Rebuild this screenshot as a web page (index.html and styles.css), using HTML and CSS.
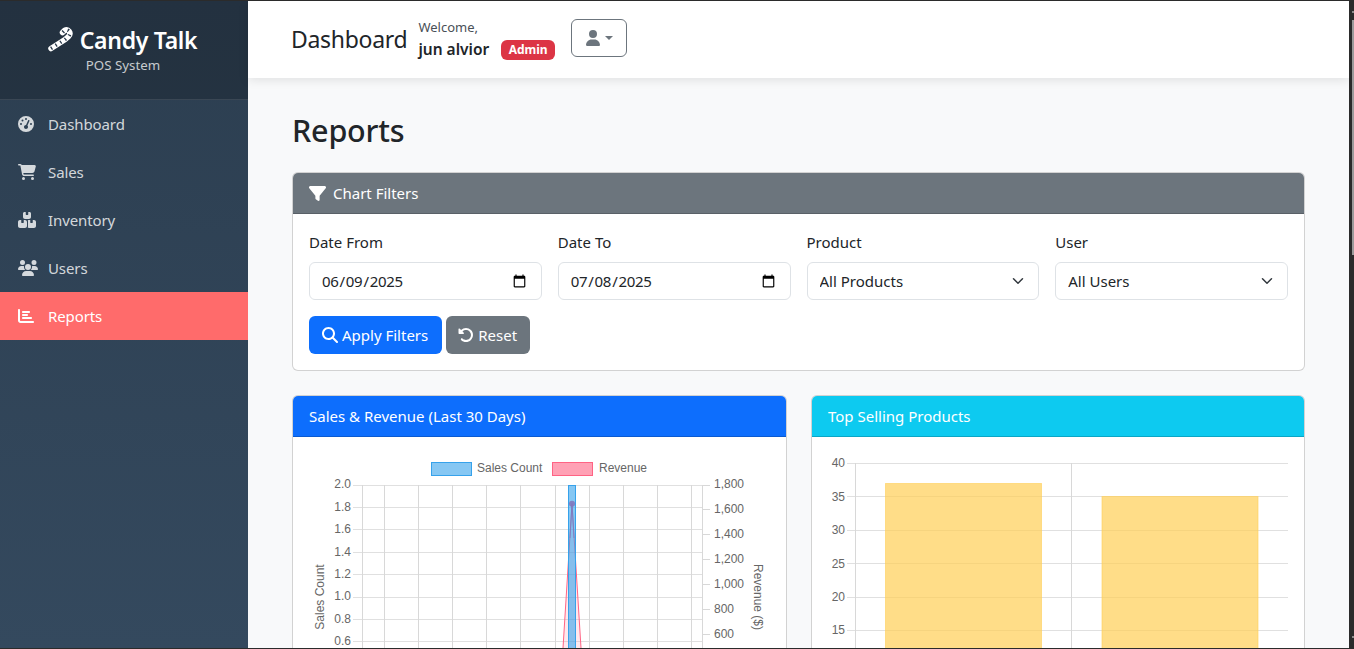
FILE: index.html
```html
<!DOCTYPE html>
<html lang="en">
<head>
  <meta charset="UTF-8">
  <title>Reports - Candy Talk</title>
  <link rel="stylesheet" href="styles.css">
</head>
<body>
  <div class="window">
    <div class="app">
      <aside class="sidebar">
        <div class="brand">
          <div class="brand-name">
            <svg class="cane" viewBox="0 0 26 26"><path class="cane-base" d="M3 21.500 L17 12.500 L20.500 9.500 C24 5.500 20 1.500 16.500 3.500 L14.500 5.500"/><path class="cane-stripe" d="M3 21.500 L17 12.500 L20.500 9.500 C24 5.500 20 1.500 16.500 3.500 L14.500 5.500"/></svg>
            Candy Talk
          </div>
          <div class="brand-sub">POS System</div>
        </div>
        <nav class="nav">
          <a class="nav-item"><svg class="nav-icon" viewBox="0 0 512 512" preserveAspectRatio="xMinYMid"><path d="M0 256a256 256 0 1 1 512 0A256 256 0 1 1 0 256zM288 96a32 32 0 1 0 -64 0 32 32 0 1 0 64 0zM256 416c35.3 0 64-28.7 64-64c0-17.4-6.9-33.1-18.1-44.6L366 161.700c5.300-12.100-.2-26.300-12.300-31.600s-26.300 .2-31.600 12.300L257.900 288c-.6 0-1.300 0-1.900 0c-35.300 0-64 28.700-64 64s28.700 64 64 64zM176 144a32 32 0 1 0 -64 0 32 32 0 1 0 64 0zM96 288a32 32 0 1 0 0-64 32 32 0 1 0 0 64zm352-32a32 32 0 1 0 -64 0 32 32 0 1 0 64 0z"/></svg>Dashboard</a>
          <a class="nav-item"><svg class="nav-icon" viewBox="0 0 576 512" preserveAspectRatio="xMinYMid"><path d="M0 24C0 10.700 10.700 0 24 0H69.500c22 0 41.500 12.800 50.600 32h411c26.300 0 45.500 25 38.600 50.400l-41 152.300c-8.500 31.400-37 53.300-69.500 53.300H170.700l5.400 28.500c2.200 11.300 12.100 19.500 23.600 19.500H488c13.300 0 24 10.700 24 24s-10.700 24-24 24H199.700c-34.600 0-64.300-24.600-70.700-58.500L77.400 54.500c-.7-3.800-4-6.500-7.900-6.500H24C10.700 48 0 37.300 0 24zM128 464a48 48 0 1 1 96 0 48 48 0 1 1 -96 0zm336-48a48 48 0 1 1 0 96 48 48 0 1 1 0-96z"/></svg>Sales</a>
          <a class="nav-item"><svg class="nav-icon" viewBox="0 0 576 512" preserveAspectRatio="xMinYMid"><path d="M248 0H208c-26.500 0-48 21.500-48 48V160c0 35.300 28.700 64 64 64H352c35.300 0 64-28.700 64-64V48c0-26.500-21.500-48-48-48H328V80c0 8.800-7.200 16-16 16H264c-8.800 0-16-7.200-16-16V0zM64 256c-35.300 0-64 28.700-64 64V448c0 35.300 28.700 64 64 64H224c35.300 0 64-28.700 64-64V320c0-35.300-28.700-64-64-64H184v80c0 8.800-7.200 16-16 16H120c-8.800 0-16-7.200-16-16V256H64zM352 512H512c35.300 0 64-28.700 64-64V320c0-35.300-28.700-64-64-64H472v80c0 8.800-7.200 16-16 16H408c-8.800 0-16-7.200-16-16V256H352c-15 0-28.800 5.100-39.700 13.800c4.900 10.400 7.700 22 7.700 34.200V464c0 12.200-2.800 23.800-7.700 34.200C323.200 506.900 337 512 352 512z"/></svg>Inventory</a>
          <a class="nav-item"><svg class="nav-icon" viewBox="0 0 640 512" preserveAspectRatio="xMinYMid"><path d="M144 0a80 80 0 1 1 0 160A80 80 0 1 1 144 0zM512 0a80 80 0 1 1 0 160A80 80 0 1 1 512 0zM0 298.700C0 239.800 47.800 192 106.700 192h42.700c15.900 0 31 3.500 44.600 9.700c-1.300 7.200-1.900 14.700-1.900 22.300c0 38.200 16.800 72.500 43.300 96c-.2 0-.4 0-.7 0H21.300C9.600 320 0 310.400 0 298.700zM405.300 320c-.2 0-.4 0-.7 0c26.600-23.500 43.300-57.800 43.300-96c0-7.600-.7-15-1.900-22.300c13.600-6.300 28.700-9.700 44.600-9.700h42.700C592.200 192 640 239.800 640 298.700c0 11.800-9.600 21.300-21.300 21.300H405.300zM224 224a96 96 0 1 1 192 0 96 96 0 1 1 -192 0zM128 485.300C128 411.700 187.700 352 261.300 352H378.700C452.300 352 512 411.700 512 485.300c0 14.700-11.900 26.700-26.700 26.700H154.700c-14.700 0-26.700-11.900-26.700-26.700z"/></svg>Users</a>
          <a class="nav-item active"><svg class="nav-icon" viewBox="0 0 512 512" preserveAspectRatio="xMinYMid"><path d="M32 32c17.700 0 32 14.300 32 32V400c0 8.800 7.200 16 16 16H480c17.700 0 32 14.300 32 32s-14.300 32-32 32H80c-44.200 0-80-35.800-80-80V64C0 46.300 14.300 32 32 32zm96 96c0-17.700 14.300-32 32-32l192 0c17.700 0 32 14.300 32 32s-14.300 32-32 32l-192 0c-17.700 0-32-14.300-32-32zm32 64H288c17.700 0 32 14.300 32 32s-14.300 32-32 32H160c-17.700 0-32-14.300-32-32s14.300-32 32-32zm0 96H416c17.700 0 32 14.300 32 32s-14.300 32-32 32H160c-17.700 0-32-14.300-32-32s14.300-32 32-32z"/></svg>Reports</a>
        </nav>
      </aside>

      <div class="main">
        <header class="topbar">
          <span class="page-name">Dashboard</span>
          <div class="welcome">
            <div class="welcome-text">Welcome,</div>
            <div class="welcome-user"><strong>jun alvior</strong><span class="badge">Admin</span></div>
          </div>
          <button type="button" class="user-btn">
            <svg class="user-icon" viewBox="0 0 448 512"><path d="M224 256A128 128 0 1 0 224 0a128 128 0 1 0 0 256zm-45.700 48C79.800 304 0 383.800 0 482.300C0 498.700 13.300 512 29.700 512H418.300c16.400 0 29.700-13.300 29.700-29.700C448 383.800 368.200 304 269.700 304H178.300z"/></svg>
            <span class="caret"></span>
          </button>
        </header>

        <main class="content">
          <h1 class="page-title">Reports</h1>

          <section class="card filters">
            <div class="card-header bg-gray">
              <svg class="header-icon" viewBox="0 0 512 512"><path d="M3.900 54.900C10.500 40.900 24.500 32 40 32H472c15.500 0 29.500 8.900 36.100 22.900s4.600 30.500-5.200 42.500L320 320.900V448c0 12.100-6.800 23.200-17.700 28.600s-23.800 4.300-33.500-3l-64-48c-8.100-6-12.800-15.500-12.800-25.600V320.900L9 97.300C-.7 85.400-2.800 68.800 3.900 54.900z"/></svg>
              Chart Filters
            </div>
            <div class="card-body">
              <div class="filter-row">
                <div class="field">
                  <label for="date-from">Date From</label>
                  <input id="date-from" class="control date" type="date" value="2025-06-09">
                </div>
                <div class="field">
                  <label for="date-to">Date To</label>
                  <input id="date-to" class="control date" type="date" value="2025-07-08">
                </div>
                <div class="field">
                  <label for="product">Product</label>
                  <select id="product" class="control select"><option>All Products</option></select>
                </div>
                <div class="field">
                  <label for="user">User</label>
                  <select id="user" class="control select"><option>All Users</option></select>
                </div>
              </div>
              <div class="filter-actions">
                <button type="button" class="btn btn-blue">
                  <svg class="btn-icon" viewBox="0 0 512 512"><path d="M416 208c0 45.900-14.900 88.300-40 122.700L502.600 457.400c12.500 12.500 12.500 32.800 0 45.300s-32.800 12.500-45.300 0L330.700 376c-34.400 25.200-76.800 40-122.700 40C93.100 416 0 322.900 0 208S93.100 0 208 0S416 93.100 416 208zM208 352a144 144 0 1 0 0-288 144 144 0 1 0 0 288z"/></svg>
                  Apply Filters
                </button>
                <button type="button" class="btn btn-gray">
                  <svg class="btn-icon" viewBox="0 0 512 512"><path d="M48.500 224H40c-13.300 0-24-10.700-24-24V72c0-9.700 5.800-18.500 14.800-22.200s19.300-1.700 26.200 5.200L98.600 96.600c87.600-86.500 228.700-86.200 315.800 1c87.500 87.500 87.500 229.300 0 316.800s-229.300 87.500-316.800 0c-12.500-12.500-12.500-32.800 0-45.300s32.800-12.500 45.300 0c62.500 62.500 163.800 62.500 226.300 0s62.500-163.800 0-226.300c-62.200-62.200-162.700-62.500-225.300-1L185 183c6.900 6.900 8.900 17.200 5.200 26.200s-12.500 14.800-22.200 14.800H48.500z"/></svg>
                  Reset
                </button>
              </div>
            </div>
          </section>

          <div class="chart-row">
            <section class="card chart-card">
              <div class="card-header bg-blue">Sales &amp; Revenue (Last 30 Days)</div>
              <div class="chart-body">
                <svg class="chart" viewBox="293 437 493 211" width="493" height="211">
                  <g class="grid">
                    <path d="M353 485.500H702M353 507.500H702M353 529.500H702M353 552.500H702M353 574.500H702M353 597.500H702M353 619.500H702M353 641.500H702"/>
                    <path d="M362.500 485V648M384.500 485V648M418.500 485V648M452.500 485V648M486.500 485V648M520.500 485V648M555.500 485V648M589.500 485V648M623.500 485V648M657.500 485V648M691.500 485V648M702.500 485V648"/>
                    <path d="M702 509.500H710M702 534.500H710M702 559.500H710M702 584.500H710M702 609.500H710M702 634.500H710M702 485.500H710"/>
                  </g>
                  <rect class="legend-blue" x="431.500" y="462.500" width="40" height="13"/>
                  <text class="tick" x="477" y="472">Sales Count</text>
                  <rect class="legend-pink" x="552.500" y="462.500" width="40" height="13"/>
                  <text class="tick" x="599" y="472">Revenue</text>
                  <g class="tick tick-left">
                    <text x="351" y="488">2.0</text>
                    <text x="351" y="511">1.8</text>
                    <text x="351" y="533">1.6</text>
                    <text x="351" y="556">1.4</text>
                    <text x="351" y="578">1.2</text>
                    <text x="351" y="600">1.0</text>
                    <text x="351" y="623">0.8</text>
                    <text x="351" y="645">0.6</text>
                  </g>
                  <g class="tick">
                    <text x="714" y="488">1,800</text>
                    <text x="714" y="513">1,600</text>
                    <text x="714" y="538">1,400</text>
                    <text x="714" y="563">1,200</text>
                    <text x="714" y="588">1,000</text>
                    <text x="714" y="613">800</text>
                    <text x="714" y="638">600</text>
                  </g>
                  <text class="tick tick-mid" transform="translate(324 597) rotate(-90)">Sales Count</text>
                  <text class="tick tick-mid" transform="translate(754 597) rotate(90)">Revenue ($)</text>
                  <path class="rev-fill" d="M563 648L572 503.700L581 648Z"/>
                  <path class="rev-line" d="M563 648L572 503.700L581 648"/>
                  <rect class="bar-blue" x="568.500" y="485.500" width="7" height="163"/>
                  <circle class="rev-point" cx="572" cy="503.700" r="3"/>
                  <path class="rev-over" d="M572 503.700L570 538M572 503.700L574 538"/>
                </svg>
              </div>
            </section>

            <section class="card chart-card">
              <div class="card-header bg-cyan">Top Selling Products</div>
              <div class="chart-body">
                <svg class="chart" viewBox="812 437 492 211" width="492" height="211">
                  <g class="grid">
                    <path d="M847 463.500H1288M847 496.500H1288M847 530.500H1288M847 563.500H1288M847 597.500H1288M847 630.500H1288"/>
                    <path d="M855.500 463V648M1071.500 463V648"/>
                  </g>
                  <rect class="bar-gold" x="885.500" y="483.500" width="156" height="165"/>
                  <rect class="bar-gold" x="1102" y="496.500" width="156" height="152"/>
                  <g class="tick tick-left">
                    <text x="845" y="467">40</text>
                    <text x="845" y="501">35</text>
                    <text x="845" y="534">30</text>
                    <text x="845" y="568">25</text>
                    <text x="845" y="601">20</text>
                    <text x="845" y="634">15</text>
                  </g>
                </svg>
              </div>
            </section>
          </div>
        </main>
      </div>
    </div>
    <div class="scrollbar">
      <div class="scroll-arrow"></div>
      <div class="scroll-thumb"></div>
      <div class="scroll-arrow scroll-arrow-end"></div>
    </div>
  </div>
</body>
</html>
```

FILE: styles.css
```css
* {
  box-sizing: border-box;
  margin: 0;
  padding: 0;
}

html, body {
  height: 100%;
  overflow: hidden;
}

body {
  font-family: "Noto Sans", "Open Sans", sans-serif;
  font-size: 15px;
  color: #212529;
  background-color: #2b2b2b;
}

.window {
  height: 649px;
  display: flex;
  padding: 1px 0 1px 0;
}

.app {
  flex: 1;
  display: flex;
  min-width: 0;
  overflow: hidden;
}

.scrollbar {
  width: 5px;
  padding: 10px 0 10px 3px;
  display: flex;
  flex-direction: column;
  background-color: #2b2b2b;
}
.scroll-arrow {
  width: 2px;
  height: 2px;
  background-color: #8a8a8a;
}
.scroll-arrow-end {
  margin-top: auto;
}
.scroll-thumb {
  height: 235px;
  width: 2px;
  margin-top: 7px;
  background-color: #9b9b9b;
}

/* sidebar */
.sidebar {
  width: 248px;
  flex-shrink: 0;
  background: linear-gradient(180deg, #2c3e50, #34495e);
  color: rgba(255, 255, 255, 0.8);
}
.brand {
  height: 99px;
  padding-top: 24px;
  text-align: center;
  background-color: rgba(0, 0, 0, 0.2);
  border-bottom: 1px solid rgba(255, 255, 255, 0.1);
}
.brand-name {
  display: flex;
  justify-content: center;
  align-items: center;
  gap: 6px;
  height: 30px;
  padding-right: 3px;
  font-size: 23px;
  font-weight: 600;
  letter-spacing: -0.3px;
  color: #fff;
}
.cane {
  width: 26px;
  height: 26px;
}
.cane-base, .cane-stripe {
  fill: none;
  stroke-width: 5.500;
  stroke-linecap: round;
}
.cane-base {
  stroke: #fff;
}
.cane-stripe {
  stroke: #2a3a4b;
  stroke-linecap: butt;
  stroke-width: 3.500;
  stroke-dasharray: 1.300 4.200;
}
.brand-sub {
  margin-top: 1px;
  padding-right: 2px;
  font-size: 13.300px;
  color: rgba(255, 255, 255, 0.75);
}
.nav-item {
  height: 48px;
  display: flex;
  align-items: center;
  padding-left: 18px;
  font-size: 15px;
  letter-spacing: -0.1px;
}
.nav-item.active {
  background-color: #ff6b6b;
  color: #fff;
}
.nav-icon {
  width: 20px;
  height: 16px;
  margin-right: 10px;
  fill: currentColor;
}

/* top bar */
.main {
  flex: 1;
  min-width: 0;
  background-color: #f8f9fa;
}
.topbar {
  height: 77px;
  display: flex;
  align-items: center;
  padding-left: 43px;
  background-color: #fff;
  box-shadow: 0 2px 10px rgba(0, 0, 0, 0.1);
}
.page-name {
  font-size: 23px;
  letter-spacing: -0.3px;
  margin-right: 11px;
  margin-bottom: 1px;
}
.welcome-text {
  font-size: 13px;
  line-height: 18px;
  color: #495057;
}
.welcome-user {
  display: flex;
  align-items: center;
  height: 26px;
  font-size: 15.500px;
}
.welcome-user strong {
  font-weight: 600;
}
.badge {
  margin-left: 12px;
  margin-top: 2px;
  width: 54px;
  height: 20px;
  line-height: 20px;
  text-align: center;
  border-radius: 6px;
  font-size: 12px;
  font-weight: 700;
  color: #fff;
  background-color: #dc3545;
}
.user-btn {
  width: 56px;
  height: 38px;
  margin: 0 0 3px 16px;
  display: flex;
  align-items: center;
  justify-content: center;
  gap: 5px;
  border: 1px solid #6c757d;
  border-radius: 6px;
  background-color: #fff;
}
.user-icon {
  width: 14px;
  height: 16px;
  fill: #6c757d;
}
.caret {
  width: 0;
  height: 0;
  border-top: 4.800px solid #6c757d;
  border-left: 4.800px solid transparent;
  border-right: 4.800px solid transparent;
}

/* content */
.content {
  padding: 30px 44px 0;
}
.page-title {
  font-size: 30.500px;
  font-weight: 500;
  line-height: 44px;
  letter-spacing: -0.2px;
  margin-bottom: 20px;
}
.card {
  background-color: #fff;
  border: 1px solid rgba(0, 0, 0, 0.175);
  border-radius: 6px;
  overflow: hidden;
}
.card-header {
  height: 41px;
  display: flex;
  align-items: center;
  gap: 7px;
  padding: 0 16px;
  font-size: 15px;
  color: #fff;
  border-bottom: 1px solid rgba(0, 0, 0, 0.175);
}
.bg-gray { background-color: #6c757d; }
.bg-blue { background-color: #0d6efd; }
.bg-cyan { background-color: #0dcaf0; }
.header-icon {
  width: 17px;
  height: 17px;
  fill: #fff;
}
.card-body {
  padding: 16px;
}
.filter-row {
  display: grid;
  grid-template-columns: repeat(4, 1fr);
  column-gap: 16px;
}
.field label {
  display: block;
  height: 32px;
  line-height: 24px;
  font-size: 15px;
}
.control {
  display: block;
  width: 100%;
  height: 38px;
  padding: 0 12px;
  font-family: inherit;
  font-size: 15px;
  color: #212529;
  background-color: #fff;
  border: 1px solid #dee2e6;
  border-radius: 6px;
  appearance: none;
}
.date {
  padding-left: 11px;
  letter-spacing: -0.3px;
}
.select {
  background-image: url("data:image/svg+xml,%3csvg xmlns='http://www.w3.org/2000/svg' viewBox='0 0 16 16'%3e%3cpath fill='none' stroke='%23343a40' stroke-linecap='round' stroke-linejoin='round' stroke-width='2' d='m2 5 6 6 6-6'/%3e%3c/svg%3e");
  background-repeat: no-repeat;
  background-position: right 12px center;
  background-size: 16px 12px;
}
.filter-actions {
  display: flex;
  gap: 4px;
  margin-top: 16px;
}
.btn {
  height: 38px;
  display: flex;
  align-items: center;
  gap: 4px;
  padding: 0 13px 0 12px;
  border: 0;
  border-radius: 6px;
  font-family: inherit;
  font-size: 15px;
  color: #fff;
}
.btn-blue {
  padding: 0 14px 0 13px;
  background-color: #0d6efd;
}
.btn-gray { background-color: #6c757d; }
.btn-icon {
  width: 16px;
  height: 16px;
  fill: #fff;
}

/* charts */
.chart-row {
  display: grid;
  grid-template-columns: 495px 494px;
  column-gap: 24px;
  margin-top: 24px;
}
.chart-body {
  height: 400px;
}
.chart {
  display: block;
}
.grid path {
  fill: none;
  stroke: #e0e0e0;
  stroke-width: 1;
}
.grid path + path {
  stroke: #d8d8d8;
}
.tick {
  font-family: "Liberation Sans", Arial, sans-serif;
  font-size: 12px;
  fill: #666;
}
.tick-left text {
  text-anchor: end;
}
.tick-mid {
  text-anchor: middle;
}
.legend-blue, .bar-blue {
  fill: rgba(54, 162, 235, 0.6);
  stroke: #36a2eb;
}
.legend-pink {
  fill: rgba(255, 99, 132, 0.6);
  stroke: #ff6384;
}
.rev-fill {
  fill: rgba(255, 99, 132, 0.15);
}
.rev-line {
  fill: none;
  stroke: #ff6384;
  stroke-width: 1;
}
.rev-point {
  fill: rgba(130, 120, 190, 0.9);
}
.rev-over {
  fill: none;
  stroke: rgba(130, 120, 190, 0.8);
}
.bar-gold {
  fill: rgba(255, 206, 86, 0.7);
  stroke: rgba(255, 206, 86, 0.6);
}
```
